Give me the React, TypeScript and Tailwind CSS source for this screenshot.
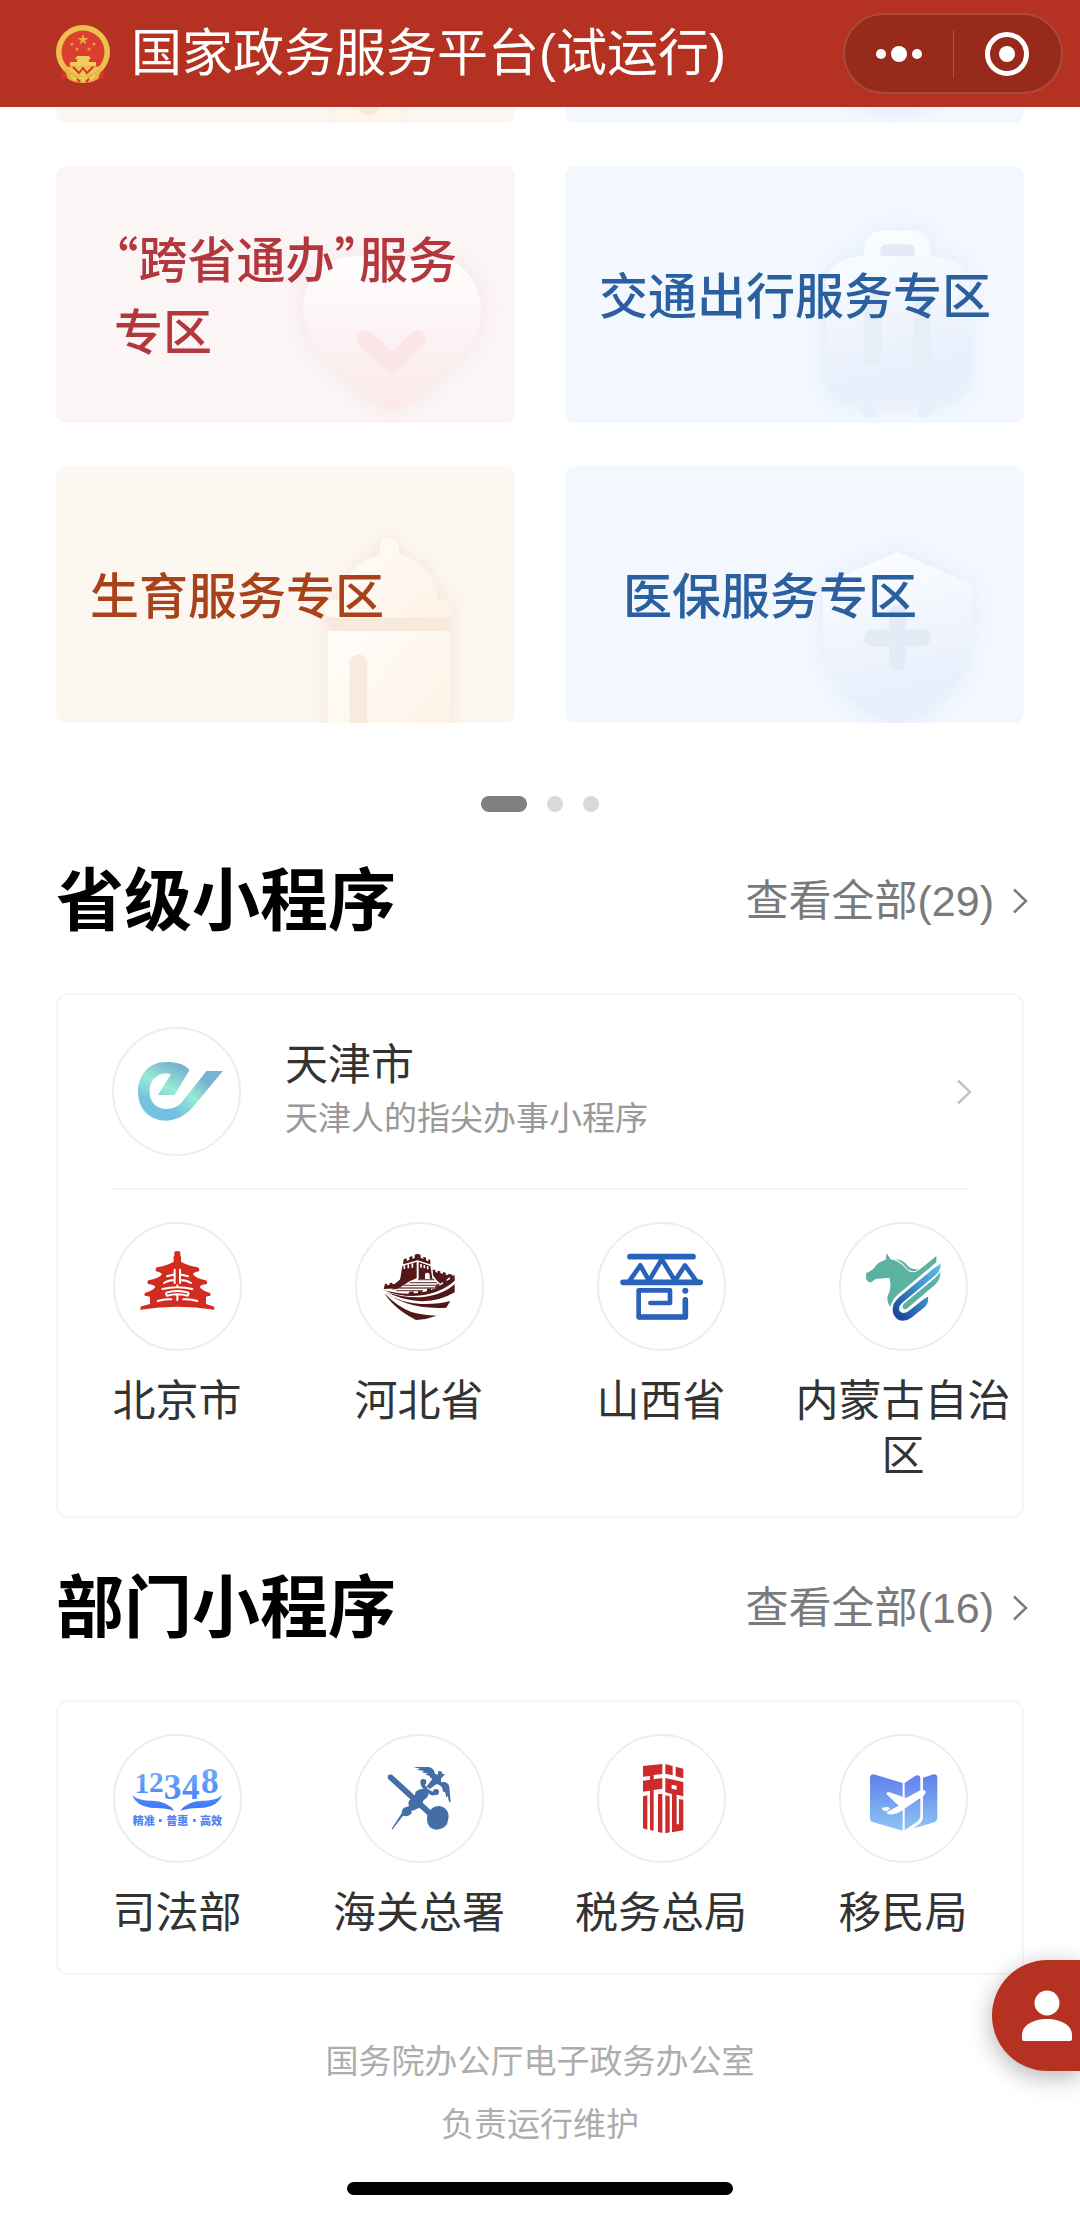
import React from "react";
import clsx from "clsx";

/* ---------- card artwork ---------- */

const cardArt = "absolute right-0 top-0 h-full w-[459px]";

const HeartArt = () => (
  <svg className={cardArt} viewBox="47 47 1377 771" aria-hidden="true">
    <defs>
      <linearGradient id="heart" x1="0" y1="0" x2="0" y2="1">
        <stop offset="0" stopColor="#fffefe" />
        <stop offset="1" stopColor="#fbe8ea" />
      </linearGradient>
      <filter id="heartBlur" x="-30%" y="-30%" width="160%" height="160%">
        <feGaussianBlur stdDeviation="28" />
      </filter>
    </defs>
    <path
      d="M945 318C850 318 788 390 788 476C788 530 808 572 845 608L1005 757Q1055 800 1105 757L1270 605C1304 572 1322 530 1322 476C1322 390 1258 318 1165 318C1120 318 1085 335 1055 362C1025 335 990 318 945 318Z"
      fill="#f6dfe2"
      opacity="0.8"
      filter="url(#heartBlur)"
    />
    <path
      d="M945 318C850 318 788 390 788 476C788 530 808 572 845 608L1005 757Q1055 800 1105 757L1270 605C1304 572 1322 530 1322 476C1322 390 1258 318 1165 318C1120 318 1085 335 1055 362C1025 335 990 318 945 318Z"
      fill="url(#heart)"
    />
    <path
      d="M976 566L1055 641L1132 566"
      fill="none"
      stroke="#fbe5e8"
      strokeWidth="52"
      strokeLinecap="round"
      strokeLinejoin="round"
    />
  </svg>
);

const SuitcaseArt = () => (
  <svg className={cardArt} viewBox="47 47 1377 771" aria-hidden="true">
    <defs>
      <linearGradient id="case" x1="0" y1="0" x2="0.2" y2="1">
        <stop offset="0" stopColor="#fdfeff" />
        <stop offset="0.85" stopColor="#e9f0fc" />
      </linearGradient>
      <filter id="caseBlur" x="-30%" y="-30%" width="160%" height="160%">
        <feGaussianBlur stdDeviation="30" />
      </filter>
    </defs>
    <path
      d="M945 318V305Q945 240 1010 240H1080Q1145 240 1145 305V318Q1262 318 1262 420V660Q1262 768 1150 768H940Q828 768 828 660V420Q828 318 945 318Z"
      fill="#dce8f7"
      opacity="0.8"
      filter="url(#caseBlur)"
    />
    <path
      d="M945 318V305Q945 240 1010 240H1080Q1145 240 1145 305V318Q1262 318 1262 420V660Q1262 768 1150 768H940Q828 768 828 660V420Q828 318 945 318Z"
      fill="url(#case)"
    />
    <path d="M993 318V303Q993 282 1015 282H1075Q1097 282 1097 303V318Z" fill="#e4ebf6" />
    <rect x="945" y="430" width="52" height="214" rx="26" fill="#e6eef8" />
    <rect x="1092" y="430" width="52" height="214" rx="26" fill="#e6eef8" />
    <path d="M930 768H980V800H945ZM1105 768H1155L1140 800H1105Z" fill="#e9f0fb" />
  </svg>
);

const BottleArt = () => (
  <svg className={cardArt} viewBox="47 47 1377 771" aria-hidden="true">
    <defs>
      <linearGradient id="bottle" x1="0" y1="0" x2="1" y2="0.7">
        <stop offset="0" stopColor="#fffdfa" />
        <stop offset="1" stopColor="#fef3e8" />
      </linearGradient>
      <filter id="bottleBlur" x="-30%" y="-30%" width="160%" height="160%">
        <feGaussianBlur stdDeviation="26" />
      </filter>
    </defs>
    <path
      d="M1018 312V290Q1020 262 1047 262Q1074 262 1076 290V312Q1185 345 1192 447H1215Q1242 450 1242 475Q1242 500 1230 502V860H862V502Q848 495 850 472Q855 447 880 447H902Q910 345 1018 312Z"
      fill="#f6e0d2"
      opacity="0.85"
      filter="url(#bottleBlur)"
    />
    <rect x="880" y="500" width="335" height="42" fill="#f7eadd" />
    <path
      d="M1018 312V290Q1020 262 1047 262Q1074 262 1076 290V312Q1185 345 1192 447H1215Q1242 450 1242 475Q1242 500 1215 502H880Q850 500 850 475Q850 450 880 447H902Q910 345 1018 312Z"
      fill="url(#bottle)"
    />
    <rect x="862" y="542" width="369" height="320" fill="url(#bottle)" />
    <rect x="928" y="612" width="52" height="260" rx="26" fill="#f8eadd" />
  </svg>
);

const ShieldArt = () => (
  <svg className={cardArt} viewBox="47 47 1377 771" aria-hidden="true">
    <defs>
      <linearGradient id="shield" x1="0" y1="0" x2="0.2" y2="1">
        <stop offset="0" stopColor="#fdfeff" />
        <stop offset="0.85" stopColor="#e9f0fc" />
      </linearGradient>
      <filter id="shieldBlur" x="-30%" y="-30%" width="160%" height="160%">
        <feGaussianBlur stdDeviation="30" />
      </filter>
    </defs>
    <path
      d="M1045 305L1255 395Q1268 401 1268 415V530C1268 680 1190 780 1045 826C900 780 820 680 820 530V415Q820 401 835 395Z"
      fill="#dce8f7"
      opacity="0.8"
      filter="url(#shieldBlur)"
    />
    <path
      d="M1045 305L1255 395Q1268 401 1268 415V530C1268 680 1190 780 1045 826C900 780 820 680 820 530V415Q820 401 835 395Z"
      fill="url(#shield)"
    />
    <path
      d="M1045 490V635M970 562H1119"
      stroke="#e3ebf7"
      strokeWidth="51"
      strokeLinecap="round"
    />
  </svg>
);

/* ---------- logos ---------- */

const Emblem = () => (
  <svg className="h-[58px] w-14 shrink-0" viewBox="0 0 56 58" aria-hidden="true">
    <path d="M8 44L6 54Q12 52 15 56L20 58H37L42 56Q45 52 50 54L48 44Z" fill="#d8352a" />
    <ellipse cx="28" cy="27" rx="27" ry="27" fill="#ecc14f" />
    <path d="M8 40Q28 62 48 40L43 54Q28 62 13 54Z" fill="#e5b548" />
    <circle cx="28" cy="27" r="21.500" fill="#dc3f2f" />
    <path d="M28 9L29.300 13H33.500L30.100 15.500L31.400 19.500L28 17L24.600 19.500L25.900 15.500L22.500 13H26.700Z" fill="#e8b040" />
    <g fill="#e89a3c">
      <circle cx="17" cy="19" r="1.600" />
      <circle cx="39" cy="19" r="1.600" />
      <circle cx="22" cy="24" r="1.600" />
      <circle cx="34" cy="24" r="1.600" />
    </g>
    <path d="M22 31H34L36 34H34V37H41V41H15V37H22V34H20Z" fill="#f3cb58" />
    <path d="M10 42Q28 40 46 42Q38 51 28 51Q18 51 10 42Z" fill="#f0c44f" />
    <path d="M18 42L24 48L28 43L32 48L38 42" fill="none" stroke="#d8352a" strokeWidth="2" />
    <path d="M16 50L21 55M40 50L35 55M28 50V57M24 53H32" stroke="#f3cf5c" strokeWidth="2" />
    <path d="M22 54L25 57M34 54L31 57" stroke="#d8352a" strokeWidth="2" />
  </svg>
);

const TianjinLogo = () => (
  <svg viewBox="113.500 1029 125 125" className="h-full w-full" aria-hidden="true">
    <defs>
      <linearGradient id="tj" gradientUnits="userSpaceOnUse" x1="180" y1="1058" x2="155" y2="1110">
        <stop offset="0.15" stopColor="#79b4cf" />
        <stop offset="0.56" stopColor="#96ecd4" />
        <stop offset="0.9" stopColor="#74c1e0" />
      </linearGradient>
      <linearGradient id="tjTail" gradientUnits="userSpaceOnUse" x1="166" y1="1118" x2="216" y2="1071">
        <stop offset="0.15" stopColor="#73c0e1" />
        <stop offset="0.48" stopColor="#96ecd4" />
        <stop offset="0.78" stopColor="#79b3d0" />
      </linearGradient>
    </defs>
    <path
      d="M174 1095L189 1070C184 1064 176 1062 166 1062C148 1062 137.500 1075 137.500 1092C137.500 1109 149 1120.700 166 1120.700V1109C156 1109 149 1102 149 1091C149 1080 157 1073.500 165 1073.500C169 1073.500 171 1074 170 1075L157.400 1095Z"
      fill="url(#tj)"
    />
    <path
      d="M165 1120.700C178 1120.700 188 1113 195 1104L222.400 1071H206L183 1100C179 1106 173 1109 165 1109Z"
      fill="url(#tjTail)"
    />
  </svg>
);

const BeijingLogo = () => (
  <svg viewBox="44 42 375 375" className="h-full w-full" aria-hidden="true">
    <path
      d="M222 126Q231 120 240 126V137Q244 140 242 145V155Q256 165 292 172Q300 176 296 184Q282 186 278 192Q282 203 316 211Q324 216 318 223Q302 224 298 230Q303 241 328 248Q334 254 328 258Q318 258 317 262V282L338 289Q345 293 341 299Q231 281 121 299Q117 293 124 289L149 282V262Q146 258 135 258Q129 254 135 248Q160 241 165 230Q160 224 145 223Q137 216 145 211Q181 203 185 192Q180 186 167 184Q163 176 170 172Q206 165 220 155V145Q218 140 222 137Z"
      fill="#d22c20"
    />
    <g fill="none" stroke="#fff" strokeWidth="6" strokeLinecap="round">
      <path d="M223 179V219M239 179V219M200 199L223 193M191 219Q205 210 223 210M263 199L239 193M272 219Q258 210 239 210" />
      <path d="M231 226V232M186 237Q231 227 276 237M200 257Q192 247 206 246Q231 240 256 246Q270 247 262 257Q231 248 200 257ZM231 254V270M172 273Q192 266 213 268M249 268Q270 266 291 273" />
    </g>
  </svg>
);

const HebeiLogo = () => (
  <svg viewBox="772 42 375 375" className="h-full w-full" aria-hidden="true">
    <g fill="#541718">
      <path d="M912 148L921 145V152L929 150V141L938 138V146L945 144V134L954 131L963 135V143L971 147V140L979 143V151L986 154V147L992 150V163L954 151L910 163Z" />
      <path d="M908 168L951 156V205L931 213L895 236L875 239Q899 222 902 205Z" />
      <path d="M957 156L992 168L999 210L990 205V192Q983 185 976 192V207H957Z" />
      <path d="M852 237L856 222L862 221V226L870 224V219L878 218V223L886 221L902 208L900 235Z" />
      <path d="M999 178L1007 181V186L1014 188V182L1022 184V190L1030 191V186L1038 188V194L1046 195V191L1060 195L1022 221Q1008 210 1000 196Z" />
      <path d="M852 240Q890 251 926 251L929 245L942 244V250L955 249V242L968 240V247L982 244V236L994 232V240L1007 235V226L1018 220V228L1030 221V212L1041 206V213L1051 207V199L1065 196V212Q1020 254 940 258Q892 258 852 240Z" />
      <path d="M862 246Q905 263 960 262Q1030 256 1065 222V247Q1015 277 955 273Q900 268 862 246Z" />
      <path d="M856 247Q900 279 965 282Q1020 283 1052 273L1040 293Q970 297 921 280Q880 265 856 247Z" />
      <path d="M855 250Q890 289 935 306Q970 316 1011 317Q980 329 949 330Q905 308 878 280Q862 264 855 250Z" />
    </g>
    <g stroke="#fff" strokeWidth="5">
      <path d="M914 166V177M926 163V175M938 160V173M964 162V173M974 165V175M984 169V178" />
    </g>
    <path
      d="M955 209H1004M930 218H1012M912 226H1022M899 234H1010M890 242H970"
      stroke="#7d5051"
      strokeWidth="4"
    />
  </svg>
);

const ShanxiLogo = () => (
  <svg viewBox="54 42 375 375" className="h-full w-full" aria-hidden="true">
    <g fill="none" stroke="#2962bb" strokeLinecap="round" strokeLinejoin="round">
      <path d="M147 140H336M126 217H358" strokeWidth="17" />
      <path d="M146 212L178 166L204 212L242 148L282 212L312 166L345 212" strokeWidth="14" />
      <path d="M208 279H267V241H173V321H313V268" strokeWidth="14" />
      <path d="M175 321H313V270" strokeWidth="17" />
    </g>
    <circle cx="313" cy="242" r="9" fill="#2962bb" />
  </svg>
);

const MongoliaLogo = () => (
  <svg viewBox="782 42 375 375" className="h-full w-full" aria-hidden="true">
    <defs>
      <linearGradient id="nmg" x1="1" y1="0" x2="0" y2="1">
        <stop offset="0" stopColor="#5bbdea" />
        <stop offset="0.4" stopColor="#3f97cf" />
        <stop offset="0.9" stopColor="#1d4a9b" />
      </linearGradient>
    </defs>
    <g fill="#5cb2a1">
      <path d="M919 130L930 146Q958 152 978 174Q988 186 1010 184Q1030 170 1068 138V157L952 254Q935 268 930 292Q918 275 922 257Q936 235 927 203Q908 205 895 206Q880 207 875 216Q862 220 857 205V190Q880 180 886 167Q895 155 916 149Z" />
      <path d="M940 148Q965 146 982 167Q995 180 1014 177L1006 184Q988 186 976 171Q962 153 940 148Z" />
      <path d="M1080 184Q1082 208 1064 224L982 294Q972 302 967 294Q965 285 974 278L1065 203Q1076 194 1080 184Z" />
    </g>
    <path
      d="M1081 161Q1082 181 1066 195L966 278Q952 290 958 303Q968 315 986 302L1030 268Q1040 260 1043 260Q1046 278 1034 290L993 323Q974 337 954 329Q930 313 940 282Q946 270 958 260L1058 177Z"
      fill="url(#nmg)"
    />
    <path d="M930 146Q958 151 976 174Q986 188 1008 184" fill="none" stroke="#fff" strokeWidth="3" />
  </svg>
);

const JusticeLogo = () => (
  <svg viewBox="44 47 375 375" className="h-full w-full" aria-hidden="true">
    <defs>
      <linearGradient id="sfb" gradientUnits="userSpaceOnUse" x1="0" y1="150" x2="0" y2="270">
        <stop offset="0" stopColor="#6facf8" />
        <stop offset="1" stopColor="#3c76fb" />
      </linearGradient>
    </defs>
    <g fill="url(#sfb)">
      <g className="font-['Liberation_Serif',serif] font-bold">
        <text x="103" y="217" fontSize="86">1</text>
        <text x="146" y="216" fontSize="88">2</text>
        <text x="190" y="237" fontSize="106">3</text>
        <text x="245" y="235" fontSize="106">4</text>
        <text x="302" y="218" fontSize="106">8</text>
      </g>
      <path d="M95 225Q118 243 155 241Q200 242 222 271Q195 262 150 262Q110 258 95 225Z" />
      <path d="M366 225Q343 243 306 241Q262 242 240 271Q267 262 312 262Q351 258 366 225Z" />
    </g>
    <g fill="#4f84f3" fontSize="33" className="font-['Noto_Sans_CJK_SC',sans-serif] font-black">
      <text x="97" y="313">精准</text>
      <text x="198" y="313">普惠</text>
      <text x="299" y="313">高效</text>
      <rect x="176" y="296" width="8" height="9" />
      <rect x="278" y="296" width="8" height="9" />
    </g>
  </svg>
);

const CustomsLogo = () => (
  <svg viewBox="772 47 375 375" className="h-full w-full" aria-hidden="true">
    <g fill="#456ea8">
      <path d="M877 163L996 272L984 285L865 175Q861 160 877 163Z" />
      <path d="M983 282Q990 276 993 268Q1000 258 1020 257Q1045 262 1047 286Q1046 300 1042 312Q1030 328 1008 328Q984 324 982 300Z" />
      <path d="M948 214Q965 200 982 208Q992 220 980 234Q972 238 970 243Q972 262 950 266Q942 272 936 270Q938 285 920 288L910 286L877 329L876 325L906 279Q905 265 918 260Q926 260 928 256Q922 245 934 236Q946 232 948 214Z" />
      <path d="M941 140H985Q1002 141 1006 160L1014 163L1016 152Q1028 150 1028 161L1036 162L1024 175V186Q1045 182 1049 200L1053 245L1048 244L1044 226L1040 232L1036 214L1031 216L1027 201Q1019 192 1011 191L990 206L981 198L998 176Q990 172 989 166L976 163L985 160L966 156L974 152L950 148L962 145Z" />
    </g>
    <path
      d="M978 204Q966 196 970 184M985 212Q998 224 1010 217"
      fill="none"
      stroke="#456ea8"
      strokeWidth="11"
      strokeLinecap="round"
    />
    <circle cx="971" cy="185" r="9" fill="#456ea8" />
    <circle cx="1009" cy="215" r="9" fill="#456ea8" />
  </svg>
);

const TaxLogo = () => (
  <svg viewBox="54 47 375 375" className="h-full w-full" aria-hidden="true">
    <g fill="#cd2a2c">
      <path d="M186 137L244 131V161L218 164V177L244 173V205L218 209V331L207 329V211L186 214V181L207 178V167L186 169Z" />
      <path d="M186 228L199 225V328L186 324Z" />
      <path d="M231 222L244 220V338L231 335Z" />
      <path d="M253 131L275 137V165L253 160Z" />
      <path d="M284 139L307 145V174L284 168Z" />
      <path fillRule="evenodd" d="M253 173L307 185V228L287 223V312H294V236L307 238V330L273 336V221L253 216ZM272 193V205L287 208V196Z" />
      <path d="M253 225L266 228V336L253 339Z" />
    </g>
  </svg>
);

const ImmigrationLogo = () => (
  <svg viewBox="782 47 375 375" className="h-full w-full" aria-hidden="true">
    <defs>
      <linearGradient id="ymj" gradientUnits="userSpaceOnUse" x1="0" y1="165" x2="0" y2="330">
        <stop offset="0" stopColor="#617fef" />
        <stop offset="1" stopColor="#8dc6f2" />
      </linearGradient>
    </defs>
    <g fill="url(#ymj)">
      <path d="M880 162L967 188V331L877 305Q869 302 869 293V171Q871 161 880 162Z" />
      <path d="M973 188L1005 166Q1019 162 1020 175V287Q1020 296 1012 303L973 330Z" />
      <path d="M1028 172L1060 162Q1070 161 1071 171V294Q1070 303 1062 306L1000 324L1018 310Q1028 302 1028 290Z" />
    </g>
    <path
      d="M1016 212Q1030 205 1036 213Q1038 220 1030 226L966 270Q946 286 921 281Q918 275 926 272L955 256L919 222Q917 216 926 215L977 233ZM904 262L922 260L930 264L920 273Q905 272 904 262Z"
      fill="#fff"
    />
  </svg>
);

/* ---------- data ---------- */

const zones = [
  { name: "“跨省通办”服务专区", art: HeartArt, tone: "bg-[#fbf5f5] text-[#b2383d] pl-[58px] pr-8" },
  { name: "交通出行服务专区", art: SuitcaseArt, tone: "bg-[#f3f8ff] text-[#2a609f] pl-[34px]" },
  { name: "生育服务专区", art: BottleArt, tone: "bg-[#fcf7f1] text-[#a8421a] pl-[34px]" },
  { name: "医保服务专区", art: ShieldArt, tone: "bg-[#f3f8ff] text-[#2a609f] pl-[58px] pr-8" },
];

const provinces = [
  { name: "北京市", logo: BeijingLogo },
  { name: "河北省", logo: HebeiLogo },
  { name: "山西省", logo: ShanxiLogo },
  { name: "内蒙古自治区", logo: MongoliaLogo },
];

const departments = [
  { name: "司法部", logo: JusticeLogo },
  { name: "海关总署", logo: CustomsLogo },
  { name: "税务总局", logo: TaxLogo },
  { name: "移民局", logo: ImmigrationLogo },
];

/* ---------- parts ---------- */

const Chevron = ({ className }: { className?: string }) => (
  <svg className={clsx("-mr-1 h-[26px] w-4 shrink-0", className)} viewBox="0 0 16 26" fill="none" aria-hidden="true">
    <path d="M2 1.500L14 13L2 24.500" stroke="currentColor" strokeWidth="2.500" />
  </svg>
);

const LogoCircle = ({ children }: { children: React.ReactNode }) => (
  <span className="block size-[129px] shrink-0 overflow-hidden rounded-full border-2 border-[#ededed] bg-white">
    {children}
  </span>
);

const Panel = ({ children }: { children: React.ReactNode }) => (
  <div className="rounded-xl py-[34px] ring-2 ring-[#f5f5f5] ring-inset">{children}</div>
);

const SectionHead = ({ title, count }: { title: string; count: number }) => (
  <div className="mb-11 flex h-24 items-center justify-between">
    <h2 className="text-[68px] leading-[96px] font-bold text-black">{title}</h2>
    <a href="#" className="flex items-center gap-[18px] text-[43px] leading-[55px] text-[#7a7a7a]">
      查看全部({count})
      <Chevron />
    </a>
  </div>
);

const AppGrid = ({ items }: { items: { name: string; logo: React.FC }[] }) => (
  <ul className="grid grid-cols-4">
    {items.map(({ name, logo: Logo }) => (
      <li key={name}>
        <a href="#" className="flex flex-col items-center gap-[23px]">
          <LogoCircle>
            <Logo />
          </LogoCircle>
          <span className="text-center text-[43px] leading-[55px] text-[#333]">{name}</span>
        </a>
      </li>
    ))}
  </ul>
);

const Header = () => (
  <header className="sticky top-0 z-10 flex h-[107px] items-center bg-[#b53121] pr-[17px] pl-[55px] text-white">
    <Emblem />
    <h1 className="ml-5 text-[51px] leading-[72px] whitespace-nowrap">国家政务服务平台(试运行)</h1>
    <div className="ml-auto flex h-[81px] w-[220px] items-center rounded-full border-2 border-[#a84a3d] bg-[#982a1b]">
      <button type="button" aria-label="更多" className="flex flex-1 items-center justify-center gap-[5px]">
        <span className="size-[10px] rounded-full bg-white" />
        <span className="size-4 rounded-full bg-white" />
        <span className="size-[10px] rounded-full bg-white" />
      </button>
      <span className="h-12 w-px bg-[#b05245]" />
      <button type="button" aria-label="关闭" className="flex flex-1 items-center justify-center">
        <span className="flex size-11 items-center justify-center rounded-full border-[5px] border-white">
          <span className="size-4 rounded-full bg-white" />
        </span>
      </button>
    </div>
  </header>
);

const App = () => {
  return (
    <div
      lang="zh-CN"
      className="relative w-full bg-white font-['Liberation_Sans','Noto_Sans_CJK_SC',sans-serif]"
    >
      <Header />

      <main className="px-14">
        {/* tail of the row that is scrolled under the header */}
        <div className="mb-[43px] grid grid-cols-2 gap-[50px]">
          <div className="h-4 overflow-hidden rounded-b-[10px] bg-[#fcf7f1]">
            <svg className="ml-auto h-4 w-[200px]" viewBox="0 0 200 16" aria-hidden="true">
              <rect x="14" y="0" width="78" height="16" fill="#fcf3ea" />
              <rect x="22" y="0" width="62" height="16" fill="#fef5ec" />
              <ellipse cx="54" cy="0" rx="10" ry="8" fill="#f8e8da" />
            </svg>
          </div>
          <div className="h-4 overflow-hidden rounded-b-[10px] bg-[#f3f8ff]">
            <svg className="ml-auto h-4 w-[200px]" viewBox="0 0 200 16" aria-hidden="true">
              <defs>
                <radialGradient id="tail">
                  <stop offset="0" stopColor="#e6eefb" />
                  <stop offset="1" stopColor="#f3f8ff" />
                </radialGradient>
              </defs>
              <ellipse cx="70" cy="0" rx="56" ry="16" fill="url(#tail)" />
            </svg>
          </div>
        </div>

        <div className="grid grid-cols-2 gap-x-[50px] gap-y-[43px]">
          {zones.map(({ name, art: Art, tone }) => (
            <a
              key={name}
              href="#"
              className={clsx("relative flex h-[257px] items-center overflow-hidden rounded-[10px] pb-1", tone)}
            >
              <Art />
              <span className="relative font-['Noto_Sans_CJK_SC',sans-serif] text-[49px] leading-[72px] font-medium [font-feature-settings:'halt']">
                {name}
              </span>
            </a>
          ))}
        </div>

        <div className="mt-[73px] mb-[41px] flex justify-center gap-5">
          <span className="h-4 w-[46px] rounded-full bg-[#808080]" />
          <span className="size-4 rounded-full bg-[#d9d9d9]" />
          <span className="size-4 rounded-full bg-[#d9d9d9]" />
        </div>

        <section className="mb-[42px]">
          <SectionHead title="省级小程序" count={29} />
          <Panel>
            <a href="#" className="mx-14 flex items-center border-b-2 border-[#f3f3f3] pb-8">
              <LogoCircle>
                <TianjinLogo />
              </LogoCircle>
              <span className="ml-11 flex-1">
                <span className="block text-[43px] leading-[55px] text-[#333]">天津市</span>
                <span className="block text-[33px] leading-[52px] text-[#999]">天津人的指尖办事小程序</span>
              </span>
              <Chevron className="text-[#c4c4c4]" />
            </a>
            <div className="pt-8">
              <AppGrid items={provinces} />
            </div>
          </Panel>
        </section>

        <section>
          <SectionHead title="部门小程序" count={16} />
          <Panel>
            <AppGrid items={departments} />
          </Panel>
        </section>
      </main>

      <footer className="mt-[55px] pb-5 text-center text-[33px] leading-[63px] text-[#adadad]">
        <p>国务院办公厅电子政务办公室</p>
        <p>负责运行维护</p>
        <div className="mx-auto mt-[26px] h-[13px] w-[386px] rounded-full bg-black" />
      </footer>

      <button
        type="button"
        aria-label="我的"
        className="fixed right-0 bottom-36 z-20 flex h-[111px] w-[88px] items-center rounded-l-full bg-[#b53121] pl-[30px] shadow-[0_6px_24px_rgba(0,0,0,0.3)]"
      >
        <svg className="h-[52px] w-[50px]" viewBox="0 0 50 52" fill="#fff" aria-hidden="true">
          <circle cx="25" cy="13" r="12.500" />
          <path d="M0 49V45C0 35 12 29 25 29S50 35 50 45V49Q50 51 48 51H2Q0 51 0 49Z" />
        </svg>
      </button>
    </div>
  );
};

export default App;
